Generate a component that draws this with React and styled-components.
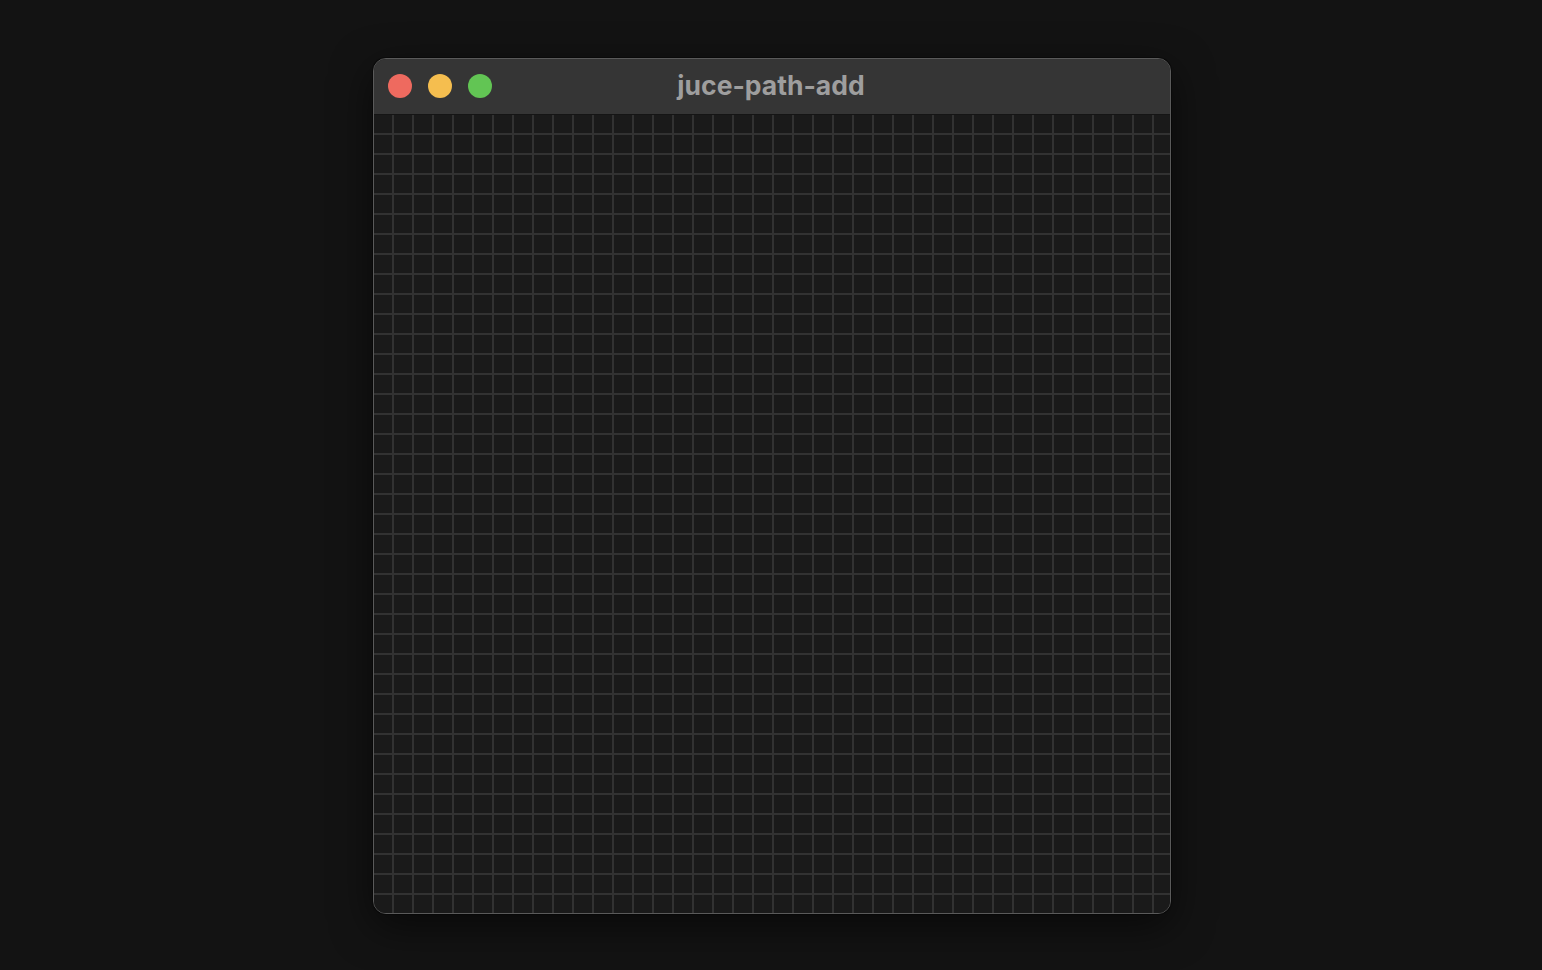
import React from "react";
import styled, { createGlobalStyle } from "styled-components";

const GlobalStyle = createGlobalStyle`
  html, body {
    margin: 0;
    padding: 0;
    background: #131313;
    font-family: Inter, "Noto Sans", "Liberation Sans", sans-serif;
  }
`;

const Page = styled.div`
  min-height: 970px;
  padding: 58px 0 0 373px;
  box-sizing: border-box;
  display: flex;
  align-items: flex-start;
`;

const Window = styled.div`
  width: 798px;
  height: 856px;
  box-sizing: border-box;
  border: 1px solid #5a5a5a;
  border-radius: 13px;
  overflow: hidden;
  display: flex;
  flex-direction: column;
  background: #1a1a1a;
  box-shadow: 0 12px 40px rgba(0, 0, 0, 0.55), 0 0 0 1px rgba(0, 0, 0, 0.35);
`;

const TitleBar = styled.div`
  height: 55px;
  flex: none;
  position: relative;
  display: flex;
  align-items: center;
  justify-content: center;
  background: #353535;
  border-bottom: 1px solid #151515;
`;

const Lights = styled.div`
  position: absolute;
  left: 14px;
  top: 15px;
  display: flex;
  gap: 16px;
`;

const Light = styled.span`
  width: 24px;
  height: 24px;
  border-radius: 50%;
  background: ${({ color }) => color};
`;

const Title = styled.div`
  color: #9e9e9e;
  font-size: 26.5px;
  font-weight: 700;
  margin: -4px 0 0 -2px;
`;

const Grid = styled.div`
  flex: 1;
  background-color: #1a1a1a;
  background-image:
    linear-gradient(to right, transparent 18px, #323232 18px, #323232 20px),
    linear-gradient(to bottom, transparent 18px, #323232 18px, #323232 20px);
  background-size: 20px 20px;
`;

const App = () => {
  return (
    <>
      <GlobalStyle />
      <Page>
        <Window>
          <TitleBar>
            <Lights>
              <Light color="#ee6a5f" />
              <Light color="#f5be4f" />
              <Light color="#62c554" />
            </Lights>
            <Title>juce-path-add</Title>
          </TitleBar>
          <Grid />
        </Window>
      </Page>
    </>
  );
};

export default App;
